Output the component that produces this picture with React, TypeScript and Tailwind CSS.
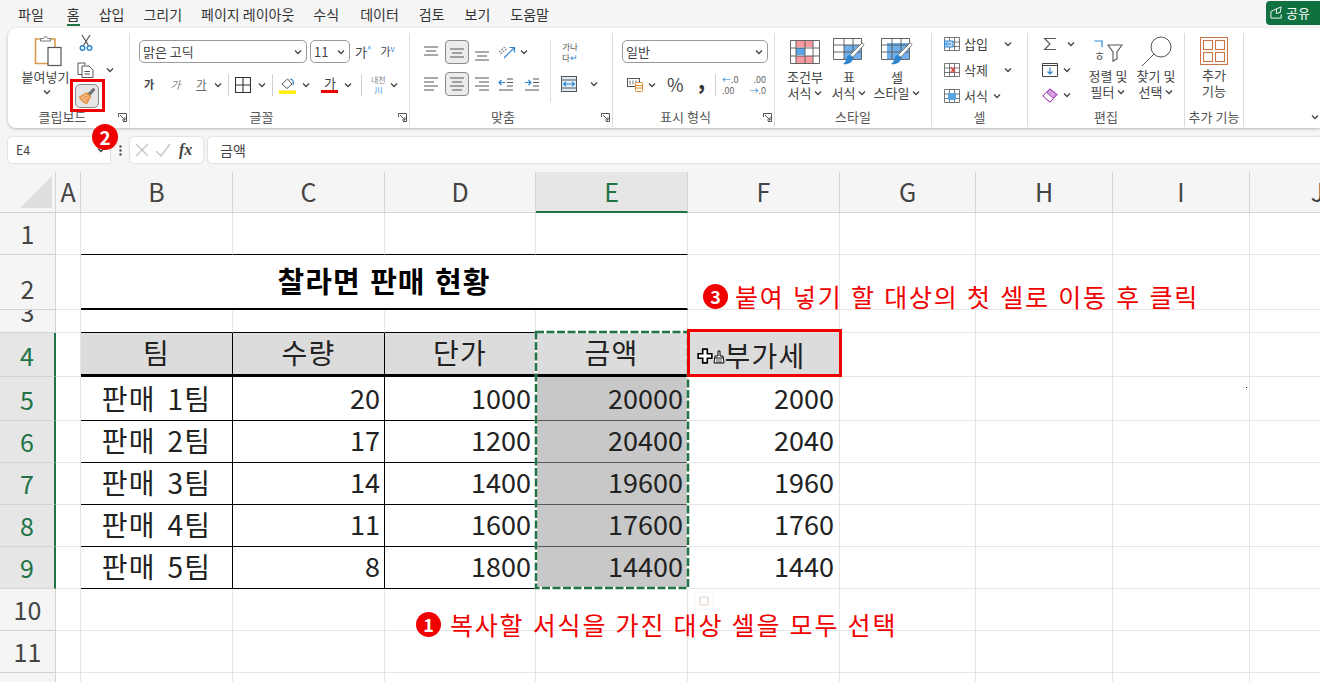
import React from "react";

const KR = "[font-family:'Noto_Sans_CJK_KR','Noto_Sans',sans-serif]";

const Chev = ({ className = "" }: { className?: string }) => (
  <svg viewBox="0 0 8 6" className={`h-[6px] w-[8px] shrink-0 ${className}`} fill="none" stroke="#444" strokeWidth="1.3">
    <path d="M1 1.5 4 4.5 7 1.5" />
  </svg>
);

const Launcher = () => (
  <svg viewBox="0 0 9 9" className="h-[9px] w-[9px] shrink-0" fill="none" stroke="#555" strokeWidth="1">
    <path d="M.5 4V.5H8.5V8.5H5" />
    <path d="M2 2 7 7M7 4V7H4" />
  </svg>
);

const Group = ({ w, label, launcher, children, labelClass = "" }: { w: string; label: string; launcher?: boolean; children: React.ReactNode; labelClass?: string }) => (
  <div className={`flex h-full shrink-0 flex-col ${w}`}>
    <div className="mt-[5px] mb-[1px] flex flex-1 flex-col border-r border-[#dcdcdc]">
      <div className="h-[75px]">{children}</div>
      <div className="flex h-[18px] items-center">
        <div className={`flex-1 whitespace-nowrap text-center text-[13px] leading-[18px] text-[#555] ${labelClass}`}>{label}</div>
        {launcher && (
          <div className="flex w-[16px] shrink-0 justify-end pr-[2px]">
            <Launcher />
          </div>
        )}
      </div>
    </div>
  </div>
);

const Lines = ({ kind }: { kind: "top" | "mid" | "bot" | "left" | "center" | "right" }) => {
  const d = {
    top: "M1 3H15M3 7H13M1 11H15",
    mid: "M1 5H15M3 9H13M1 13H15",
    bot: "M1 8H15M3 12H13M1 16H15",
    left: "M1 2H15M1 6H11M1 10H15M1 14H11",
    center: "M1 2H15M3 6H13M1 10H15M3 14H13",
    right: "M1 2H15M5 6H15M1 10H15M5 14H15",
  }[kind];
  return (
    <svg viewBox="0 0 16 17" className="h-[17px] w-[16px]" fill="none" stroke="#555" strokeWidth="1.1">
      <path d={d} />
    </svg>
  );
};

const Pressed = ({ children }: { children: React.ReactNode }) => (
  <div className="flex h-[24px] w-[24px] items-center justify-center rounded-[4px] border border-[#8a8a8a] bg-[#ececec]">{children}</div>
);

const Paste = () => (
  <svg viewBox="0 0 28 32" className="ml-[5px] h-[32px] w-[28px]" fill="none">
    <path d="M7 4H1.5V28.5H15" stroke="#d99a4e" strokeWidth="1.6" />
    <path d="M16 4H21V12" stroke="#d99a4e" strokeWidth="1.6" />
    <path d="M6.5 6V3.5H9.5L11.5 1 13.5 3.5H16.5V6Z" fill="#fff" stroke="#777" strokeWidth="1" />
    <rect x="14" y="12.5" width="13" height="18" fill="#fff" stroke="#555" strokeWidth="1.2" />
  </svg>
);

const Scissors = () => (
  <svg viewBox="0 0 14 18" className="h-[18px] w-[14px]" fill="none">
    <path d="M3 1 9.5 11.5M11 1 4.5 11.5" stroke="#555" strokeWidth="1.2" />
    <circle cx="3.5" cy="14" r="2.3" stroke="#2e86d0" strokeWidth="1.4" />
    <circle cx="10.5" cy="14" r="2.3" stroke="#2e86d0" strokeWidth="1.4" />
  </svg>
);

const Copy = () => (
  <svg viewBox="0 0 18 16" className="h-[16px] w-[18px]" fill="none" stroke="#555" strokeWidth="1">
    <path d="M5 12.5H1V1H8V3" />
    <path d="M5 4H12L16 8V15.5H5Z" fill="#fff" />
    <path d="M7.5 9.5H13M7.5 12H13" />
  </svg>
);

const Brush = () => (
  <svg viewBox="0 0 18 18" className="h-[18px] w-[18px]" fill="none">
    <path d="M10 6.5 14.8 1.8C15.8 1 17.2 2.2 16.4 3.3L12 8.5Z" fill="#777" stroke="#555" strokeWidth=".8" />
    <path d="M1.5 10 8.7 6 12.5 9.6 8.7 16.5C6 15.8 3 13 1.5 10Z" fill="#f3b883" stroke="#e08a35" strokeWidth="1.2" />
    <path d="M5 11.5 9.5 9M7 14.2 10.8 11" stroke="#e08a35" strokeWidth="1" />
  </svg>
);

const Borders = () => (
  <svg viewBox="0 0 16 16" className="h-[16px] w-[16px]" fill="none" stroke="#333" strokeWidth="1.1">
    <path d="M.5.5H15.5V15.5H.5ZM8 .5V15.5M.5 8H15.5" />
  </svg>
);

const Fill = () => (
  <svg viewBox="0 0 17 18" className="h-[18px] w-[17px]" fill="none">
    <path d="M3 8 8.5 3 13 8 8 12.5Z" fill="#fff" stroke="#555" strokeWidth="1" />
    <path d="M11 3C14 3 15 6 14 9" stroke="#2e86d0" strokeWidth="1.2" />
    <rect x="0" y="14.5" width="17" height="3.4" fill="#ffef00" />
  </svg>
);

const Orient = () => (
  <svg viewBox="0 0 18 14" className="h-[14px] w-[18px]" fill="none">
    <path d="M1 7 7 2M2.5 9 8.5 4" stroke="#888" strokeWidth="1.2" strokeDasharray="2 1" />
    <path d="M6 13 16 3M11.5 2.5H16.5V7.5" stroke="#2e86d0" strokeWidth="1.2" />
  </svg>
);

const Indent = ({ right }: { right?: boolean }) => (
  <svg viewBox="0 0 16 14" className="h-[14px] w-[16px]" fill="none">
    <path d="M9 2H15M9 5.5H15M9 9H15M1 13H15" stroke="#555" strokeWidth="1" />
    <path d={right ? "M1 5.5H7M4.5 3 7 5.5 4.5 8" : "M7 5.5H1M3.5 3 1 5.5 3.5 8"} stroke="#2e86d0" strokeWidth="1.2" />
  </svg>
);

const Merge = () => (
  <svg viewBox="0 0 16 16" className="h-[16px] w-[16px]" fill="none">
    <rect x=".5" y=".5" width="15" height="15" fill="#dcecf9" stroke="#555" />
    <path d="M.5 4H15.5M.5 12H15.5" stroke="#555" />
    <path d="M2.5 8H13.5M5 6 2.5 8 5 10M11 6 13.5 8 11 10" stroke="#2e86d0" strokeWidth="1.1" />
  </svg>
);

const Accounting = () => (
  <svg viewBox="0 0 16 15" className="h-[15px] w-[16px]" fill="none">
    <rect x=".5" y="1.5" width="12" height="8" stroke="#555" />
    <path d="M3 3.5V7.5M6 3.5V7.5M9 3.5V7.5" stroke="#777" />
    <rect x="8.5" y="5.5" width="7" height="9" rx="1" fill="#fff" stroke="#e08a2c" />
    <path d="M9 8.5H15M9 11H15" stroke="#e08a2c" />
  </svg>
);

const CondFmt = () => (
  <svg viewBox="0 0 30 24" className="h-[24px] w-[30px]" fill="none">
    <rect x="6" y="1" width="17" height="6" fill="#f89a9f" />
    <rect x="6" y="8" width="9" height="7" fill="#5aa5e8" />
    <rect x="6" y="16" width="17" height="7" fill="#f89a9f" />
    <path d="M.5.5H29.5V23.5H.5ZM.5 8H29.5M.5 16H29.5M6 .5V23.5M15 .5V23.5M23 .5V23.5" stroke="#555" strokeWidth=".9" />
  </svg>
);

const BrushOver = ({ full }: { full?: boolean }) => (
  <svg viewBox="0 0 32 30" className="h-[30px] w-[32px]" fill="none">
    {full ? <rect x="6" y="6" width="22" height="16" fill="#6fb0ec" /> : <rect x="11" y="8" width="17" height="14" fill="#6fb0ec" />}
    <path d="M.5 1.5H28.5V22.5H.5ZM.5 8H28.5M.5 15H28.5M11 1.5V22.5M20 1.5V22.5" stroke="#555" strokeWidth=".9" />
    <path d="M17 18 28.5 6.5C30 5.5 31.5 7 30.5 8.5L20 20" fill="#fff" stroke="#777" strokeWidth="1" />
    <path d="M10 27C14 28 20 26 20 21 19 18 16 17 14.5 19 13 21 14 24 10 27Z" fill="#2e86d0" />
  </svg>
);

const CellIcon = ({ kind }: { kind: "ins" | "del" | "fmt" }) => (
  <svg viewBox="0 0 16 14" className="h-[14px] w-[16px]" fill="none">
    <path d="M.5.5H15.5V13.5H.5ZM.5 5H15.5M.5 9.5H15.5M5.5.5V13.5M10.5.5V13.5" stroke="#555" strokeWidth=".8" />
    {kind === "ins" && <path d="M.5 4H9V10H.5ZM7 7H1.5M3.5 5 1.5 7 3.5 9" fill="#bcdcf5" stroke="#2e86d0" strokeWidth="1" />}
    {kind === "del" && <path d="M7 4.5 11 9.5M11 4.5 7 9.5" stroke="#e0483c" strokeWidth="1.4" />}
    {kind === "fmt" && <rect x="4" y="4" width="8" height="7" fill="#5aa5e8" />}
  </svg>
);

const Sigma = () => (
  <svg viewBox="0 0 14 14" className="h-[14px] w-[14px]" fill="none" stroke="#555" strokeWidth="1.1">
    <path d="M13 1.5H1.5L7 7 1.5 12.5H13" />
  </svg>
);

const FillDown = () => (
  <svg viewBox="0 0 16 14" className="h-[14px] w-[16px]" fill="none">
    <path d="M.5.5H15.5V13.5H.5Z" stroke="#444" />
    <path d="M.5 2.5H15.5" stroke="#444" />
    <path d="M8 4.5V11M5.5 8.5 8 11 10.5 8.5" stroke="#2e86d0" strokeWidth="1.2" />
  </svg>
);

const Eraser = () => (
  <svg viewBox="0 0 16 15" className="h-[15px] w-[16px]" fill="none">
    <path d="M1 8 8 1 15 6.5 8 14Z" fill="#d9a0e0" stroke="#a04bb5" strokeWidth="1.1" />
    <path d="M4.5 4.5 11.5 10.5 8 14 1 8Z" fill="#fff" stroke="#a04bb5" strokeWidth="1" />
  </svg>
);

const SortFilter = () => (
  <svg viewBox="0 0 30 24" className="h-[24px] w-[30px]" fill="none">
    <path d="M1.5 2H9V8" stroke="#2e86d0" strokeWidth="1.2" />
    <path d="M15 6H29L24 13V20L20 22V13Z" stroke="#555" strokeWidth="1.1" />
    <text x="1" y="22" fontSize="12" fill="#555">ㅎ</text>
  </svg>
);

const Search = () => (
  <svg viewBox="0 0 31 31" className="h-[31px] w-[31px]" fill="none" stroke="#555" strokeWidth="1">
    <circle cx="20" cy="11" r="10" />
    <path d="M13 18 1 30" />
  </svg>
);

const AddIn = () => (
  <svg viewBox="0 0 28 28" className="h-[28px] w-[28px]" fill="none" stroke="#c8764a" strokeWidth="1.1">
    <rect x=".5" y=".5" width="27" height="27" />
    <rect x="3.5" y="3.5" width="9" height="9" />
    <rect x="15.5" y="3.5" width="9" height="9" />
    <rect x="3.5" y="15.5" width="9" height="9" />
    <rect x="15.5" y="15.5" width="9" height="9" />
  </svg>
);

const Select = ({ className, text }: { className: string; text: string }) => (
  <div className={`flex h-[23px] items-center justify-between rounded-[5px] border border-[#9a9a9a] bg-white pl-[3px] pr-[4px] text-[13px] text-[#444] ${className}`}>
    <span className="whitespace-nowrap">{text}</span>
    <Chev />
  </div>
);

const RibbonBtn = ({ w, icon, l1, l2 }: { w: string; icon: React.ReactNode; l1: string; l2: string }) => (
  <div className={`flex ${w} shrink-0 flex-col items-center`}>
    <div className="flex h-[28px] items-center justify-center">{icon}</div>
    <div className="mt-[3px] whitespace-nowrap text-[13px] leading-[16px] text-[#444]">{l1}</div>
    <div className="flex items-center gap-[3px] whitespace-nowrap text-[13px] leading-[16px] text-[#444]">
      {l2.replace(" v", "")}
      {l2.endsWith(" v") && <Chev />}
    </div>
  </div>
);

const Ribbon = () => (
  <div className="ml-[8px] flex h-[100px] rounded-l-[8px] bg-white shadow-[0_1px_3px_rgba(0,0,0,0.25)]">
    <Group w="w-[122px]" label="클립보드" launcher labelClass="pl-[4px]">
      <div className="flex">
        <div className="flex w-[69px] flex-col items-center pl-[6px] pt-[2px]">
          <Paste />
          <div className="mt-[2px] whitespace-nowrap text-[13px] leading-[16px] text-[#444]">붙여넣기</div>
          <Chev className="mt-[4px] ml-[3px]" />
        </div>
        <div className="flex flex-col pt-[1px]">
          <div className="ml-[2px] flex h-[18px] w-[14px] items-center justify-center"><Scissors /></div>
          <div className="mt-[10px] flex items-center gap-[11px]"><Copy /><Chev /></div>
          <div className="-ml-[2px] mt-[6px] flex h-[24px] w-[24px] items-center justify-center rounded-[5px] border border-[#8a8a8a] bg-[#e6e6e6]"><Brush /></div>
        </div>
      </div>
    </Group>

    <Group w="w-[280px]" label="글꼴" launcher>
      <div className="pl-[9px] pt-[7px]">
        <div className="flex items-center">
          <Select className="w-[168px]" text="맑은 고딕" />
          <Select className="ml-[3px] w-[40px]" text="11" />
          <span className="ml-[5px] text-[13px] text-[#444]">가</span>
          <span className="mb-[6px] text-[8px] text-[#2e86d0]">^</span>
          <span className="ml-[9px] text-[11px] text-[#444]">가</span>
          <span className="mb-[6px] text-[8px] text-[#2e86d0]">v</span>
        </div>
        <div className="mt-[10px] flex h-[23px] items-center text-[11px] text-[#444]">
          <span className="ml-[5px] font-bold">가</span>
          <span className="ml-[16px] text-[#888] italic">가</span>
          <span className="ml-[16px] text-[#666] underline">가</span>
          <Chev className="ml-[8px]" />
          <div className="ml-[6px] h-[22px] w-px bg-[#d0d0d0]" />
          <div className="ml-[6px]"><Borders /></div>
          <Chev className="ml-[7px]" />
          <div className="ml-[6px] h-[22px] w-px bg-[#d0d0d0]" />
          <div className="ml-[6px]"><Fill /></div>
          <Chev className="ml-[6px]" />
          <div className="ml-[11px] flex w-[17px] flex-col items-center">
            <span className="text-[13px] leading-[14px]">가</span>
            <div className="h-[3px] w-[17px] bg-[#f00000]" />
          </div>
          <Chev className="ml-[6px]" />
          <div className="ml-[9px] h-[22px] w-px bg-[#d0d0d0]" />
          <div className="ml-[5px] flex w-[22px] flex-col items-center text-[8px] leading-[10px] text-[#888]">
            <span>내천</span>
            <span className="text-[#2e86d0]">川</span>
          </div>
          <Chev className="ml-[1px]" />
        </div>
      </div>
    </Group>

    <Group w="w-[203px]" label="맞춤" launcher>
      <div className="flex pt-[7px]">
        <div className="h-[62px] w-[141px] border-r border-[#dcdcdc] pl-[13px]">
          <div className="flex h-[24px] items-center">
            <Lines kind="top" />
            <div className="ml-[6px]"><Pressed><Lines kind="mid" /></Pressed></div>
            <div className="ml-[5px]"><Lines kind="bot" /></div>
            <div className="ml-[8px]"><Orient /></div>
            <Chev className="ml-[4px]" />
          </div>
          <div className="mt-[8px] flex h-[24px] items-center">
            <Lines kind="left" />
            <div className="ml-[6px]"><Pressed><Lines kind="center" /></Pressed></div>
            <div className="ml-[5px]"><Lines kind="right" /></div>
            <div className="ml-[8px]"><Indent /></div>
            <div className="ml-[10px]"><Indent right /></div>
          </div>
        </div>
        <div className="pl-[10px]">
          <div className="flex h-[24px] w-[18px] flex-col items-center justify-center whitespace-nowrap text-[8.5px] leading-[11px] text-[#555]">
            <span>가나</span>
            <span>다<span className="text-[#2e86d0]">↵</span></span>
          </div>
          <div className="mt-[8px] flex h-[24px] items-center gap-[13px]"><Merge /><Chev /></div>
        </div>
      </div>
    </Group>

    <Group w="w-[162px]" label="표시 형식" launcher>
      <div className="pl-[9px] pt-[7px]">
        <Select className="w-[146px]" text="일반" />
        <div className="mt-[10px] flex h-[23px] items-center">
          <div className="ml-[5px]"><Accounting /></div>
          <Chev className="ml-[5px]" />
          <span className="ml-[11px] w-[16px] text-[18px] leading-[23px] text-[#444]">%</span>
          <span className="ml-[15px] -mt-[11px] w-[5px] text-[22px] font-bold leading-[23px] text-[#333]">,</span>
          <div className="ml-[12px] h-[22px] w-px bg-[#d0d0d0]" />
          <div className="ml-[6px] flex w-[18px] flex-col whitespace-nowrap text-[9px] leading-[11px] text-[#666]">
            <span><span className="text-[#2e86d0]">←</span>.0</span>
            <span>.00</span>
          </div>
          <div className="ml-[8px] flex w-[18px] flex-col whitespace-nowrap text-right text-[9px] leading-[11px] text-[#666]">
            <span>.00</span>
            <span><span className="text-[#2e86d0]">→</span>.0</span>
          </div>
        </div>
      </div>
    </Group>

    <Group w="w-[157px]" label="스타일">
      <div className="flex pl-[9px] pt-[5px]">
        <RibbonBtn w="w-[42px]" icon={<CondFmt />} l1="조건부" l2="서식 v" />
        <RibbonBtn w="w-[46px]" icon={<BrushOver />} l1="표" l2="서식 v" />
        <RibbonBtn w="w-[50px]" icon={<BrushOver full />} l1="셀" l2="스타일 v" />
      </div>
    </Group>

    <Group w="w-[96px]" label="셀">
      <div className="flex flex-col gap-[8px] pl-[12px] pt-[2px] text-[13px] leading-[18px] text-[#444]">
        <div className="flex h-[18px] items-center"><CellIcon kind="ins" /><span className="ml-[4px] w-[38px]">삽입</span><Chev className="ml-[2px]" /></div>
        <div className="flex h-[18px] items-center"><CellIcon kind="del" /><span className="ml-[4px] w-[38px]">삭제</span><Chev className="ml-[2px]" /></div>
        <div className="flex h-[18px] items-center"><CellIcon kind="fmt" /><span className="ml-[4px] w-[28px]">서식</span><Chev className="ml-[1px]" /></div>
      </div>
    </Group>

    <Group w="w-[157px]" label="편집">
      <div className="flex pl-[14px] pt-[2px]">
        <div className="flex w-[42px] flex-col">
          <div className="flex h-[18px] items-center pl-[1px]"><Sigma /><Chev className="ml-[10px]" /></div>
          <div className="mt-[8px] flex h-[18px] items-center"><FillDown /><Chev className="ml-[5px]" /></div>
          <div className="mt-[7px] flex h-[18px] items-center"><Eraser /><Chev className="ml-[5px]" /></div>
        </div>
        <div className="pt-[2px]"><RibbonBtn w="w-[48px]" icon={<SortFilter />} l1="정렬 및" l2="필터 v" /></div>
        <div className="ml-[2px] pt-[2px]"><RibbonBtn w="w-[44px]" icon={<Search />} l1="찾기 및" l2="선택 v" /></div>
      </div>
    </Group>

    <div className="flex h-full w-[59px] shrink-0 flex-col">
      <div className="mt-[5px] mb-[1px] flex flex-1 flex-col border-r border-[#dcdcdc]">
        <div className="h-[75px] pt-[4px]">
          <div className="flex justify-center"><AddIn /></div>
          <div className="mt-[2px] text-center text-[13px] leading-[16px] text-[#444]">추가<br />기능</div>
        </div>
        <div className="h-[18px] whitespace-nowrap text-center text-[13px] leading-[18px] text-[#555]">추가 기능</div>
      </div>
    </div>

    <div className="flex flex-1 items-end justify-end pb-[8px] pr-[1px]">
      <Chev />
    </div>
  </div>
);

const FormulaBar = () => (
  <div className="mt-[9px] flex h-[26px] items-stretch">
    <div className="ml-[8px] flex w-[102px] items-center justify-between rounded-l-[4px] bg-white pl-[8px] pr-[5px] text-[12.5px] text-[#444] shadow-[0_0_2px_rgba(0,0,0,0.25)]">
      E4
      <Chev />
    </div>
    <div className="flex w-[20px] items-center justify-center">
      <svg viewBox="0 0 3 11" className="h-[11px] w-[3px]" fill="#555"><circle cx="1.5" cy="1.5" r="1.2" /><circle cx="1.5" cy="5.5" r="1.2" /><circle cx="1.5" cy="9.5" r="1.2" /></svg>
    </div>
    <div className="flex w-[73px] items-center rounded-[4px] bg-white pl-[5px] shadow-[0_0_2px_rgba(0,0,0,0.25)]">
      <svg viewBox="0 0 14 14" className="h-[14px] w-[14px]" fill="none" stroke="#c4c4c4" strokeWidth="1.3"><path d="M1 1 13 13M13 1 1 13" /></svg>
      <svg viewBox="0 0 16 14" className="ml-[6px] h-[14px] w-[16px]" fill="none" stroke="#c4c4c4" strokeWidth="1.3"><path d="M1 8 6 13 15 1" /></svg>
      <span className="ml-[8px] [font-family:'Liberation_Serif',serif] text-[16px] font-bold italic text-[#444]">fx</span>
    </div>
    <div className="ml-[5px] flex flex-1 items-center rounded-l-[4px] bg-white pl-[12px] text-[14px] text-[#444] shadow-[0_0_2px_rgba(0,0,0,0.25)]">금액</div>
  </div>
);

const colLetters = ["A", "B", "C", "D", "E", "F", "G", "H", "I", "J"];
const CELL = "flex items-end overflow-hidden pb-[2px] text-[27px] leading-[40px] text-[#222]";
const KCELL = "flex items-end overflow-hidden whitespace-nowrap pb-[2px] text-[28px] leading-[40px] tracking-[1.3px] [word-spacing:4px] text-[#222]";
const GL = "border-r border-b border-[#e6e6e6]";
const HDR = "flex items-end justify-center overflow-hidden border-r border-b border-[#d4d4d4] bg-[#f5f5f5] pb-[1px] text-[25px] leading-[40px] text-[#444]";
const HDR_ON = "flex items-end justify-center overflow-hidden border-r-2 border-b border-r-[#217346] border-b-[#d4d4d4] bg-[#e6e6e6] pb-[1px] text-[25px] leading-[40px] text-[#217346]";

const RowHead = ({ n, on }: { n: number; on?: boolean }) => <div className={on ? HDR_ON : HDR}>{n}</div>;

const Tail = () => (
  <>
    <div className={GL} />
    <div className={GL} />
    <div className={GL} />
    <div className={GL} />
  </>
);

const EmptyRow = ({ n, black }: { n: number; black?: boolean }) => (
  <>
    <RowHead n={n} />
    <div className={GL} />
    {[0, 1, 2, 3].map((i) => (
      <div key={i} className={black ? "border-r border-b border-r-[#e6e6e6] border-b-black" : GL} />
    ))}
    <div className={GL} />
    <Tail />
  </>
);

const rows: [string, number, number, number, number][] = [
  ["판매 1팀", 20, 1000, 20000, 2000],
  ["판매 2팀", 17, 1200, 20400, 2040],
  ["판매 3팀", 14, 1400, 19600, 1960],
  ["판매 4팀", 11, 1600, 17600, 1760],
  ["판매 5팀", 8, 1800, 14400, 1440],
];

const Sheet = () => (
  <div className="relative mt-[9px] h-[510px] overflow-hidden bg-white">
    <div className="grid w-[1400px] grid-cols-[56px_25px_152px_152px_151px_152px_152px_136px_137px_137px_136px] grid-rows-[41px_42px_55px_23px_44px_44px_42px_42px_42px_42px_42px_42px_42px]">
      <div className="flex items-center justify-end border-r border-b border-[#d4d4d4] bg-[#f5f5f5] pr-[3px]">
        <svg viewBox="0 0 32 32" className="h-[32px] w-[32px]"><path d="M32 0V32H0Z" fill="#dedede" /></svg>
      </div>
      {colLetters.map((c) => (
        <div
          key={c}
          className={
            c === "E"
              ? "flex items-center justify-center border-r border-b-2 border-r-[#d4d4d4] border-b-[#217346] bg-[#e6e6e6] text-[25px] text-[#217346]"
              : "flex items-center justify-center border-r border-b border-[#d4d4d4] bg-[#f5f5f5] text-[25px] text-[#444]"
          }
        >
          {c}
        </div>
      ))}

      <EmptyRow n={1} black />

      <RowHead n={2} />
      <div className={GL} />
      <div className="col-span-4 flex items-center justify-center border-b-2 border-r border-b-black border-r-[#e6e6e6] pb-[2px] text-[29px] font-bold tracking-[1px] [word-spacing:2px] text-black">찰라면 판매 현황</div>
      <div className={GL} />
      <Tail />

      <EmptyRow n={3} black />

      <RowHead n={4} on />
      <div className={GL} />
      {["팀", "수량", "단가"].map((t) => (
        <div key={t} className={`${KCELL} justify-center border-r border-b-[3px] border-black bg-[#dcdcdc]`}>{t}</div>
      ))}
      <div className={`${KCELL} justify-center border-r border-b-[3px] border-black bg-[#dcdcdc]`}>금액</div>
      <div className={`${KCELL} justify-center bg-[#dcdcdc] pl-[2px]`}>부가세</div>
      <Tail />

      {rows.map((r, i) => (
        <React.Fragment key={r[0]}>
          <RowHead n={i + 5} on />
          <div className={GL} />
          <div className={`${KCELL} justify-center border-r border-b border-black`}>{r[0]}</div>
          <div className={`${CELL} justify-end border-r border-b border-black pr-[4px]`}>{r[1]}</div>
          <div className={`${CELL} justify-end border-r border-b border-black pr-[4px]`}>{r[2]}</div>
          <div className={`${CELL} justify-end border-r border-b border-r-black border-b-[#555] bg-[#c8c8c8] pr-[4px]`}>{r[3]}</div>
          <div className={`${CELL} ${GL} justify-end pr-[5px]`}>{r[4]}</div>
          <Tail />
        </React.Fragment>
      ))}

      <EmptyRow n={10} />
      <EmptyRow n={11} />
      <EmptyRow n={12} />
    </div>

    {/* marching ants around the copied range */}
    <svg className="absolute left-[534px] top-[158px] h-[260px] w-[156px]" viewBox="0 0 156 260" fill="none">
      <rect x="2" y="2" width="152" height="256" stroke="#fff" strokeWidth="2.5" />
      <rect x="2" y="2" width="152" height="256" stroke="#217346" strokeWidth="2.5" strokeDasharray="8 2.5" />
    </svg>
    {/* red box on the target */}
    <div className="absolute left-[687px] top-[157px] h-[48px] w-[155px] border-[3px] border-[#f00000]" />
    {/* paint cursor */}
    <div className="absolute left-[697px] top-[176px] flex items-end">
      <svg viewBox="0 0 14 14" className="h-[16px] w-[16px]" fill="#fff" stroke="#000" strokeWidth="1.4"><path d="M5 1H9V5H13V9H9V13H5V9H1V5H5Z" /></svg>
      <svg viewBox="0 0 12 14" className="h-[14px] w-[12px]"><path d="M5 1H7V6H10L11 13H1L2 6H5Z" fill="#fff" stroke="#000" strokeWidth="1" /><path d="M2 8H10" stroke="#000" /><path d="M4 9V13M6 9V13M8 9V13" stroke="#000" strokeWidth=".7" /></svg>
    </div>
    {/* ghost paste options */}
    <div className="absolute left-[695px] top-[420px] flex h-[18px] w-[18px] items-center justify-center border border-[#efefef] opacity-40">
      <svg viewBox="0 0 12 12" className="h-[12px] w-[12px]" fill="none" stroke="#b08060"><path d="M2 2H10V10H2Z" /></svg>
    </div>
    <div className="absolute left-[1246px] top-[215px] h-px w-px bg-black" />

    {/* annotations */}
    <div className="absolute left-[703px] top-[107px] flex items-center gap-[7px] whitespace-nowrap text-[25px] leading-[34px] tracking-[1.8px] [word-spacing:1px] text-[#f00000]">
      <span className="flex h-[25px] w-[25px] items-center justify-center rounded-full bg-[#f00000] text-[18px] font-bold tracking-normal text-white">3</span>
      붙여 넣기 할 대상의 첫 셀로 이동 후 클릭
    </div>
    <div className="absolute left-[416px] top-[435px] flex items-center gap-[9px] whitespace-nowrap text-[25px] leading-[34px] tracking-[1.8px] [word-spacing:1px] text-[#f00000]">
      <span className="flex h-[25px] w-[25px] items-center justify-center rounded-full bg-[#f00000] text-[18px] font-bold tracking-normal text-white">1</span>
      복사할 서식을 가진 대상 셀을 모두 선택
    </div>
  </div>
);

export default function App() {
  return (
    <div className={`relative h-[682px] w-[1320px] overflow-hidden bg-[#f5f5f5] ${KR}`}>
      <div className="flex h-[28px] items-center whitespace-nowrap pl-[18px] text-[14px] text-[#333]">
        <span>파일</span>
        <span className="ml-[23px] border-b-2 border-[#217346] pt-[2px] leading-[20px]">홈</span>
        <span className="ml-[19px]">삽입</span>
        <span className="ml-[19px]">그리기</span>
        <span className="ml-[19px]">페이지 레이아웃</span>
        <span className="ml-[19px]">수식</span>
        <span className="ml-[21px]">데이터</span>
        <span className="ml-[20px]">검토</span>
        <span className="ml-[20px]">보기</span>
        <span className="ml-[20px]">도움말</span>
        <div className="mb-[3px] ml-auto flex h-[24px] w-[54px] items-center gap-[3px] rounded-l-[4px] bg-[#0f7040] pl-[4px] text-[13px] text-white">
          <svg viewBox="0 0 14 14" className="h-[13px] w-[13px]" fill="none" stroke="#fff" strokeWidth="1"><path d="M1 6V13H12V9M7 3 1 6M7 3 12 1 11 7 7 8Z" /></svg>
          공유
        </div>
      </div>
      <Ribbon />
      <FormulaBar />
      <Sheet />
      {/* step 2 marker and red frame over the ribbon */}
      <div className="absolute left-[70px] top-[79px] h-[33px] w-[35px] border-[3px] border-[#f00000]" />
      <div className="absolute left-[92px] top-[124px] flex h-[26px] w-[26px] items-center justify-center rounded-full bg-[#f00000] text-[19px] font-bold text-white">2</div>
    </div>
  );
}
